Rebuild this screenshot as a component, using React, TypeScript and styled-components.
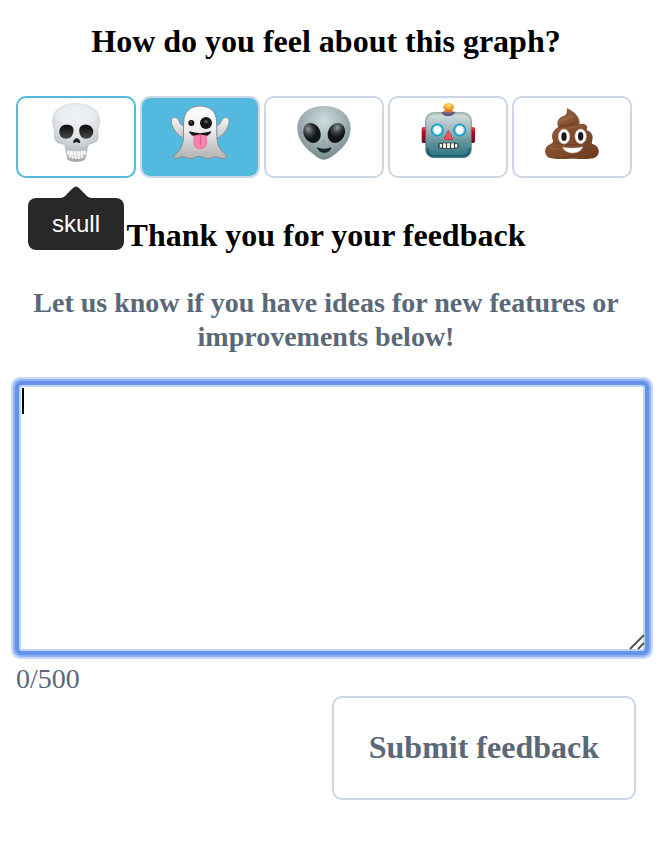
import React, { useState } from "react";
import styled, { createGlobalStyle } from "styled-components";

const GlobalStyle = createGlobalStyle`
  *, *::before, *::after { box-sizing: border-box; }
  body {
    margin: 0;
    background: #fff;
    color: #000;
    font-family: "Liberation Serif", "Times New Roman", serif;
  }
`;

const Page = styled.main`
  padding: 23px 30px 24px 16px;
`;

const Heading = styled.h1`
  margin: 0;
  font-size: 32px;
  line-height: 36px;
  font-weight: 700;
  text-align: center;
`;

const Choices = styled.div`
  display: grid;
  grid-template-columns: repeat(5, 1fr);
  gap: 4px;
  margin: 37px 0 39px;
  padding-right: 4px;
`;

const Choice = styled.button<{ $selected: boolean; $hovered: boolean }>`
  position: relative;
  display: flex;
  justify-content: center;
  align-items: flex-start;
  height: 82px;
  padding: 3px 0 0;
  border: 2px solid ${(p) => (p.$hovered ? "#54b9de" : "#cbd7e6")};
  border-radius: 10px;
  background: ${(p) => (p.$selected ? "#54b9de" : "#fff")};
  background-clip: padding-box;
  cursor: pointer;

  svg {
    width: 64px;
    height: 64px;
  }
`;

const Tooltip = styled.span`
  position: absolute;
  top: 100px;
  left: 50%;
  transform: translateX(-50%);
  padding: 12px 24px;
  border-radius: 8px;
  background: #282828;
  color: #fff;
  font-family: "Liberation Sans", Arial, sans-serif;
  font-size: 24px;
  line-height: 28px;

  && svg {
    position: absolute;
    left: 50%;
    bottom: 100%;
    width: 32px;
    height: 12px;
    transform: translateX(-50%);
  }
`;

const Prompt = styled.label`
  display: block;
  margin: 33px 0 31px;
  color: #5a6878;
  font-size: 28px;
  line-height: 34px;
  font-weight: 700;
  text-align: center;
`;

const Field = styled.div`
  position: relative;
  margin: 0 -9px 11px 3px;
`;

const Message = styled.textarea`
  display: block;
  width: 100%;
  height: 266px;
  padding: 2px;
  border: 2px solid #bed5fb;
  border-radius: 3px;
  outline: none;
  box-shadow: 0 0 0 4px #6692e8, 0 0 0 6px #8fb1f3, 0 0 0 8px #c7daf9;
  background: #fff;
  color: #000;
  font-family: "Liberation Sans", Arial, sans-serif;
  font-size: 22px;
  resize: none;
`;

const Caret = styled.span`
  position: absolute;
  top: 3px;
  left: 3px;
  width: 2px;
  height: 26px;
  background: #000;
`;

const Grip = styled.svg`
  position: absolute;
  right: 0;
  bottom: 1px;
  width: 16px;
  height: 16px;
  pointer-events: none;
`;

const Footer = styled.div`
  display: flex;
  flex-direction: column;
  gap: 1px;
`;

const Counter = styled.span`
  color: #5a6878;
  font-size: 28px;
  line-height: 33px;
`;

const Submit = styled.button`
  align-self: flex-end;
  padding: 31px 35px 33px;
  border: 2px solid #cbd7e6;
  border-radius: 10px;
  background: #fff;
  color: #5a6878;
  font-family: inherit;
  font-size: 32px;
  line-height: 36px;
  font-weight: 700;
  cursor: pointer;
`;

const Skull = () => (
  <svg viewBox="102 33 192 192" aria-hidden="true">
    <defs>
      <radialGradient id="bone" cx=".5" cy=".3" r=".65">
        <stop offset="0" stopColor="#f1f3f5" />
        <stop offset=".65" stopColor="#dfe3e6" />
        <stop offset="1" stopColor="#bcc3c8" />
      </radialGradient>
      <linearGradient id="socket" x1="0" y1="0" x2="0" y2="1">
        <stop offset="0" stopColor="#080808" />
        <stop offset="1" stopColor="#4a4a4a" />
      </linearGradient>
      <linearGradient id="jaw" x1="0" y1="0" x2="0" y2="1">
        <stop offset="0" stopColor="#c9ced1" />
        <stop offset="1" stopColor="#a5a7aa" />
      </linearGradient>
    </defs>
    <path d="M164 170 L172 208 Q180 216 198 216 Q217 216 226 208 L236 166 Z" fill="url(#jaw)" />
    <path d="M198 39 C153 39 126 61 126 94 C126 107 133 117 132 129 C129 151 140 161 154 162 C164 163 165 171 168 181 Q198 188 230 181 C232 170 234 163 244 162 C260 160 269 149 265 130 C263 117 271 108 271 94 C271 61 243 39 198 39 Z" fill="url(#bone)" />
    <ellipse cx="198" cy="76" rx="62" ry="27" fill="#eef1f3" opacity=".6" />
    <path d="M148 124 C149 108 160 103 174 104 C187 105 193 113 190 126 C188 139 179 147 168 146 C155 146 147 137 148 124 Z M208 126 C206 112 213 104 227 104 C240 104 249 111 250 124 C250 137 241 146 229 146 C218 147 210 139 208 126 Z" fill="url(#socket)" />
    <path d="M200 145 C195 145 190 151 189 156 C190 161 196 158 200 155 C204 159 210 161 211 155 C209 150 205 145 200 145 Z" fill="#202124" />
    <path d="M168 181 Q198 190 230 181" fill="none" stroke="#b7bbbf" strokeWidth="3" />
    <g fill="#fbfbfb" stroke="#b1b4b7" strokeWidth="1">
      <rect x="171" y="181" width="9" height="15" rx="3" />
      <rect x="180" y="182" width="10" height="18" rx="3" />
      <rect x="190" y="183" width="11" height="18" rx="3" />
      <rect x="201" y="183" width="10" height="18" rx="3" />
      <rect x="211" y="182" width="9" height="17" rx="3" />
      <rect x="220" y="181" width="8" height="14" rx="3" />
      <rect x="176" y="195" width="8" height="8" rx="3" />
      <rect x="184" y="198" width="9" height="8" rx="3" />
      <rect x="193" y="199" width="9" height="8" rx="3" />
      <rect x="202" y="199" width="9" height="8" rx="3" />
      <rect x="211" y="196" width="9" height="8" rx="3" />
    </g>
  </svg>
);

const Ghost = () => (
  <svg viewBox="96 33 192 192" aria-hidden="true">
    <defs>
      <linearGradient id="sheet" x1="0" y1="0" x2="0" y2="1">
        <stop offset="0" stopColor="#fff" />
        <stop offset=".4" stopColor="#f2f2f3" />
        <stop offset=".75" stopColor="#cbcaca" />
        <stop offset="1" stopColor="#b5b4b3" />
      </linearGradient>
      <linearGradient id="arm" x1="0" y1="0" x2="0" y2="1">
        <stop offset="0" stopColor="#f5f5f5" />
        <stop offset="1" stopColor="#c5c4c4" />
      </linearGradient>
    </defs>
    <g fill="url(#arm)" stroke="#85939a" strokeWidth="3">
      <path d="M148 106 C134 110 131 98 128 90 C124 81 111 80 107 88 C102 104 120 137 147 147 Z" />
      <path d="M237 106 C251 109 253 98 258 90 C263 81 276 80 279 89 C282 105 267 137 238 147 Z" />
    </g>
    <path d="M192 48 C162 48 144 66 143 94 L142 145 C141 170 129 184 114 198 C108 205 121 208 131 203 C139 199 144 199 151 203 C161 208 168 207 177 202 C187 197 197 199 206 204 C214 208 223 207 229 203 C239 196 249 205 259 206 C271 207 275 201 267 193 C252 177 244 166 243 144 L242 94 C241 65 222 48 192 48 Z" fill="url(#sheet)" stroke="#7d8a91" strokeWidth="3" />
    <path d="M155 174 C152 185 144 193 134 197 M176 185 L168 199 M213 184 C214 195 218 201 227 203" fill="none" stroke="#aaa9a8" strokeWidth="3" opacity=".55" />
    <circle cx="166" cy="99" r="9" fill="#141414" />
    <circle cx="210" cy="99" r="18" fill="#171717" />
    <ellipse cx="210" cy="95" rx="6" ry="5" fill="#505050" />
    <circle cx="165" cy="96" r="3" fill="#555" />
    <path d="M159 124 Q192 135 226 124 C224 132 217 137 209 139 L175 139 C167 137 161 132 159 124 Z" fill="#171312" />
    <path d="M174 137 Q192 132 211 137 L212 158 C211 170 202 176 192 176 C182 176 174 170 174 158 Z" fill="#f983ae" stroke="#e65f91" strokeWidth="2" />
    <path d="M193 139 V161" stroke="#dc5589" strokeWidth="3" strokeLinecap="round" />
  </svg>
);

const Alien = () => (
  <svg viewBox="96 33 192 192" aria-hidden="true">
    <defs>
      <radialGradient id="skin" cx=".5" cy=".28" r=".7">
        <stop offset="0" stopColor="#ccdddf" />
        <stop offset=".5" stopColor="#a5b5b8" />
        <stop offset="1" stopColor="#798b8e" />
      </radialGradient>
      <radialGradient id="visor" cx=".4" cy=".25" r=".65">
        <stop offset="0" stopColor="#929999" />
        <stop offset=".4" stopColor="#3e4445" />
        <stop offset=".75" stopColor="#101516" />
      </radialGradient>
    </defs>
    <path d="M192 48 C141 48 112 78 112 115 C112 151 138 177 163 195 C176 205 183 209 192 209 C202 209 209 205 221 196 C247 177 272 151 272 115 C272 78 243 48 192 48 Z" fill="url(#skin)" />
    <ellipse cx="156" cy="129" rx="25" ry="31" transform="rotate(-27 156 129)" fill="url(#visor)" />
    <ellipse cx="229" cy="129" rx="25" ry="31" transform="rotate(27 229 129)" fill="url(#visor)" />
    <path d="M188 154 Q192 151 196 154" fill="none" stroke="#718488" strokeWidth="2" />
    <path d="M171 171 C182 178 202 178 214 171 C212 194 175 195 171 171 Z" fill="#192629" />
  </svg>
);

const Robot = () => (
  <svg viewBox="96 33 192 192" aria-hidden="true">
    <defs>
      <linearGradient id="metal" x1="0" y1="0" x2="0" y2="1">
        <stop offset="0" stopColor="#d5e0df" />
        <stop offset=".34" stopColor="#a5bdc0" />
        <stop offset=".67" stopColor="#5e929b" />
        <stop offset="1" stopColor="#267080" />
      </linearGradient>
      <linearGradient id="ear" x1="0" y1="0" x2="0" y2="1">
        <stop offset="0" stopColor="#e84d55" />
        <stop offset=".3" stopColor="#c20820" />
        <stop offset="1" stopColor="#67101c" />
      </linearGradient>
      <radialGradient id="lamp" cx=".5" cy=".25" r=".7">
        <stop offset="0" stopColor="#ffe371" />
        <stop offset=".6" stopColor="#f9ae32" />
        <stop offset="1" stopColor="#d8781d" />
      </radialGradient>
    </defs>
    <rect x="113" y="111" width="19" height="48" rx="5" fill="url(#ear)" />
    <rect x="254" y="111" width="19" height="48" rx="5" fill="url(#ear)" />
    <rect x="125" y="68" width="137" height="135" rx="24" fill="url(#metal)" stroke="#53727b" strokeWidth="2" />
    <path d="M131 84 Q133 73 151 72 H237 Q252 73 256 84" fill="none" stroke="#a5c3a8" strokeWidth="5" />
    <path d="M130 174 Q130 199 152 198 H235 Q257 198 257 174" fill="none" stroke="#1a5d6d" strokeWidth="5" />
    <path d="M172 66 Q193 60 214 66 C211 74 202 79 193 79 C183 79 175 74 172 66 Z" fill="#61558c" />
    <path d="M184 54 H203 L206 66 Q194 70 181 66 Z" fill="#d9822c" />
    <ellipse cx="194" cy="51" rx="16" ry="12" fill="url(#lamp)" />
    <g fill="#fff" stroke="#1599c5" strokeWidth="7">
      <circle cx="160" cy="120" r="16" />
      <circle cx="227" cy="120" r="16" />
    </g>
    <g fill="none" stroke="#74d6ef" strokeWidth="3">
      <circle cx="160" cy="120" r="14" />
      <circle cx="227" cy="120" r="14" />
    </g>
    <path d="M193 121 L181 146 Q180 149 184 149 H203 Q207 149 205 146 Z" fill="#ef5259" stroke="#ab3346" strokeWidth="2" />
    <rect x="162" y="158" width="62" height="18" rx="9" fill="#343d3e" />
    <g fill="#eff1e5">
      <rect x="167" y="161" width="7" height="12" rx="3" />
      <rect x="177" y="160" width="9" height="14" rx="1" />
      <rect x="189" y="160" width="9" height="14" rx="1" />
      <rect x="201" y="160" width="9" height="14" rx="1" />
      <rect x="213" y="161" width="7" height="12" rx="3" />
    </g>
  </svg>
);

const Pile = () => (
  <svg viewBox="96 33 192 192" aria-hidden="true">
    <defs>
      <linearGradient id="cocoa" x1="0" y1="0" x2="1" y2="1">
        <stop offset="0" stopColor="#9c6848" />
        <stop offset=".45" stopColor="#85502f" />
        <stop offset="1" stopColor="#6b3c1c" />
      </linearGradient>
    </defs>
    <path d="M176 54 C179 69 174 76 162 80 C149 85 145 99 151 111 C137 118 129 133 133 146 C137 155 134 158 128 162 C105 169 106 201 129 205 C146 209 171 206 192 206 C213 206 239 209 256 205 C277 200 279 171 256 163 C249 160 252 157 253 149 C257 135 249 125 236 121 C241 106 233 99 215 103 C217 80 198 64 176 54 Z" fill="url(#cocoa)" />
    <path d="M157 103 C174 108 190 97 209 93 C206 104 194 107 174 112 C162 115 153 113 151 111" fill="#693b1d" opacity=".5" />
    <path d="M154 97 C164 86 182 87 193 78" fill="none" stroke="#ad7955" strokeWidth="5" strokeLinecap="round" opacity=".5" />
    <path d="M155 117 C180 119 203 105 229 108 M128 174 C145 184 170 170 188 178" fill="none" stroke="#a16c48" strokeWidth="4" strokeLinecap="round" opacity=".5" />
    <path d="M136 156 C155 169 227 164 251 153 M141 203 C178 205 220 193 248 178" fill="none" stroke="#5e3319" strokeWidth="3" opacity=".45" />
    <g fill="#fff" stroke="#cec9c2" strokeWidth="2">
      <ellipse cx="168" cy="140" rx="17" ry="22" />
      <ellipse cx="218" cy="139" rx="17" ry="22" />
    </g>
    <ellipse cx="168" cy="140" rx="8" ry="13" fill="#171b1b" />
    <ellipse cx="218" cy="139" rx="8" ry="13" fill="#171b1b" />
    <path d="M164 171 C181 175 206 175 224 170 C223 181 208 189 194 189 C178 189 166 181 164 171 Z" fill="#fff" stroke="#bca38f" strokeWidth="2" />
  </svg>
);

const moods = [
  { name: "skull", Icon: Skull },
  { name: "ghost", Icon: Ghost },
  { name: "alien", Icon: Alien },
  { name: "robot", Icon: Robot },
  { name: "poop", Icon: Pile },
];

const LIMIT = 500;

export default function App() {
  const [selected, setSelected] = useState("ghost");
  const [hovered, setHovered] = useState("skull");
  const [message, setMessage] = useState("");
  const [editing, setEditing] = useState(false);

  return (
    <>
      <GlobalStyle />
      <Page>
        <Heading>How do you feel about this graph?</Heading>
        <Choices role="group" aria-label="Rating">
          {moods.map(({ name, Icon }) => (
            <Choice
              key={name}
              type="button"
              aria-label={name}
              aria-pressed={selected === name}
              $selected={selected === name}
              $hovered={hovered === name}
              onMouseEnter={() => setHovered(name)}
              onClick={() => setSelected(name)}
            >
              <Icon />
              {hovered === name && (
                <Tooltip role="tooltip">
                  <svg viewBox="0 0 32 12" aria-hidden="true">
                    <path d="M0 12 C4 12 6 9 8 7 L13 2 Q16 -1 19 2 L24 7 C26 9 28 12 32 12 Z" fill="#282828" />
                  </svg>
                  {name}
                </Tooltip>
              )}
            </Choice>
          ))}
        </Choices>
        <Heading as="h2">Thank you for your feedback</Heading>
        <Prompt htmlFor="message">
          Let us know if you have ideas for new features or improvements below!
        </Prompt>
        <Field>
          <Message
            id="message"
            maxLength={LIMIT}
            value={message}
            onFocus={() => setEditing(true)}
            onBlur={() => setEditing(false)}
            onChange={(e) => setMessage(e.target.value)}
          />
          {!editing && message === "" && <Caret />}
          <Grip viewBox="0 0 16 16" aria-hidden="true">
            <path d="M1 15 L15 1 M9 15 L15 9" stroke="#555" strokeWidth="2" fill="none" />
          </Grip>
        </Field>
        <Footer>
          <Counter>
            {message.length}/{LIMIT}
          </Counter>
          <Submit type="button">Submit feedback</Submit>
        </Footer>
      </Page>
    </>
  );
}
